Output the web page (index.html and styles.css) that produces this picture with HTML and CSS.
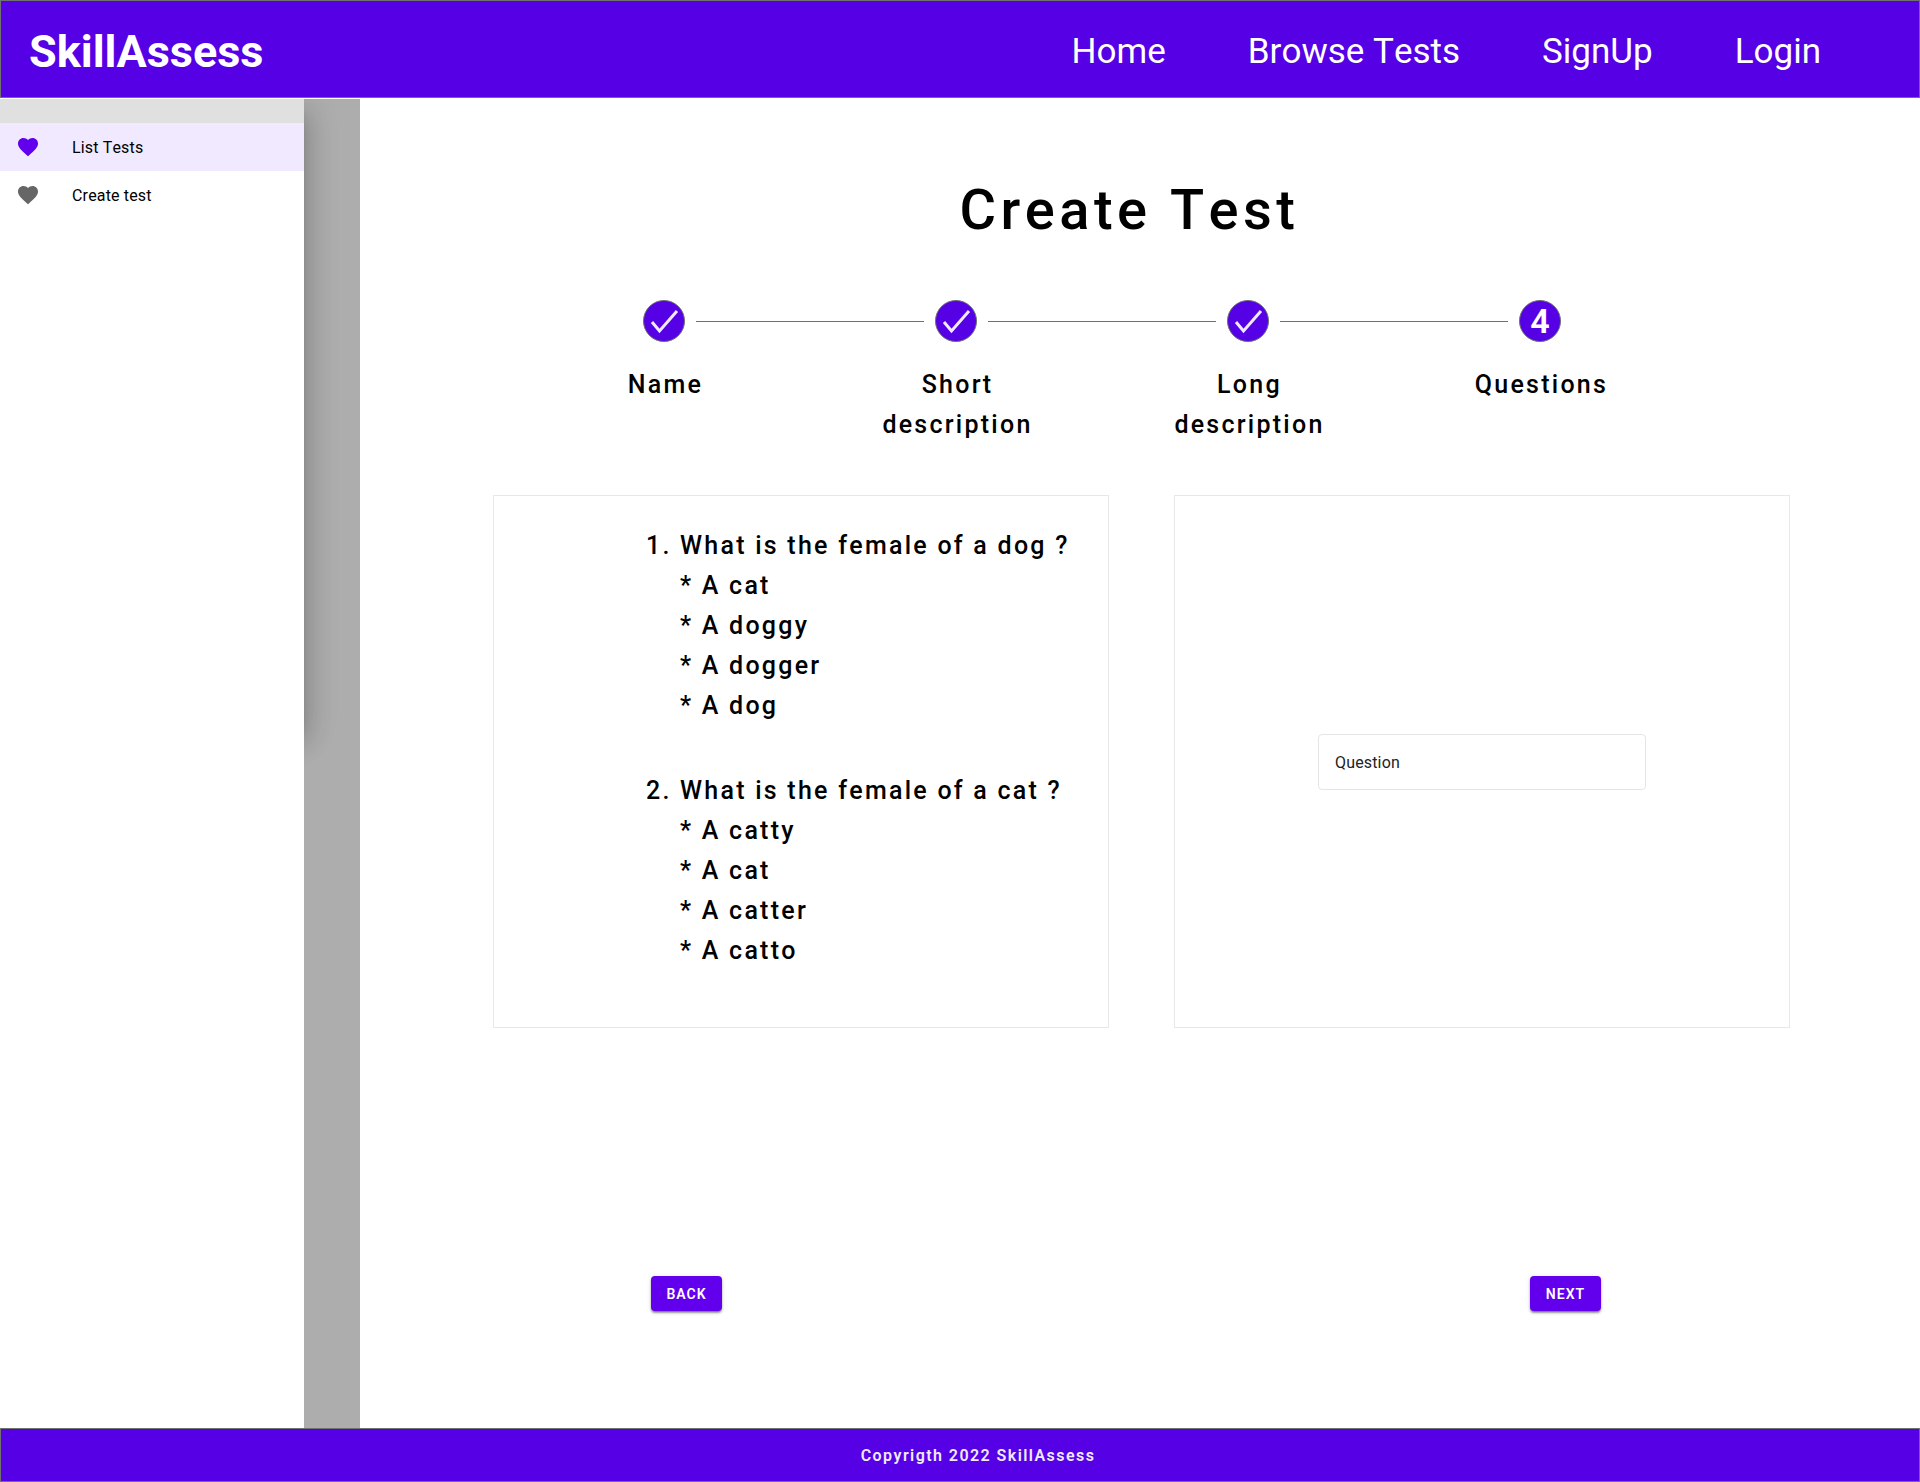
FILE: index.html
```html
<!DOCTYPE html>
<html lang="en">
<head>
  <meta charset="utf-8">
  <meta name="viewport" content="width=device-width, initial-scale=1">
  <title>SkillAssess - Create Test</title>
  <link rel="stylesheet" href="styles.css">
</head>
<body>
  <header class="topbar">
    <a class="brand" href="#">SkillAssess</a>
    <nav class="topnav">
      <a href="#">Home</a>
      <a href="#">Browse Tests</a>
      <a href="#">SignUp</a>
      <a href="#">Login</a>
    </nav>
  </header>

  <div class="layout">
    <aside class="sidebar">
      <nav class="drawer">
        <a class="drawer-item is-active" href="#">
          <svg class="heart" viewBox="0 0 24 24" aria-hidden="true"><path d="M12 21.35l-1.45-1.32C5.4 15.36 2 12.28 2 8.5 2 5.42 4.42 3 7.5 3c1.74 0 3.41.81 4.5 2.09C13.09 3.81 14.76 3 16.5 3 19.58 3 22 5.42 22 8.5c0 3.78-3.4 6.86-8.55 11.54L12 21.35z"/></svg>
          <span>List Tests</span>
        </a>
        <a class="drawer-item" href="#">
          <svg class="heart" viewBox="0 0 24 24" aria-hidden="true"><path d="M12 21.35l-1.45-1.32C5.4 15.36 2 12.28 2 8.5 2 5.42 4.42 3 7.5 3c1.74 0 3.41.81 4.5 2.09C13.09 3.81 14.76 3 16.5 3 19.58 3 22 5.42 22 8.5c0 3.78-3.4 6.86-8.55 11.54L12 21.35z"/></svg>
          <span>Create test</span>
        </a>
      </nav>
      <div class="scrim"></div>
    </aside>

    <main class="content">
      <h1 class="title">Create Test</h1>

      <ol class="steps">
        <li class="step">
          <div class="track"><span class="badge"><svg viewBox="1 1 40 40" aria-hidden="true"><path d="M9 22l7.500 9L34 11"/></svg></span></div>
          <span class="step-label">Name</span>
        </li>
        <li class="step">
          <div class="track"><span class="badge"><svg viewBox="1 1 40 40" aria-hidden="true"><path d="M9 22l7.500 9L34 11"/></svg></span></div>
          <span class="step-label">Short description</span>
        </li>
        <li class="step">
          <div class="track"><span class="badge"><svg viewBox="1 1 40 40" aria-hidden="true"><path d="M9 22l7.500 9L34 11"/></svg></span></div>
          <span class="step-label">Long description</span>
        </li>
        <li class="step">
          <div class="track"><span class="badge">4</span></div>
          <span class="step-label">Questions</span>
        </li>
      </ol>

      <div class="panels">
        <section class="panel panel-list">
          <ol class="questions">
            <li class="question">
              <span class="number">1.</span>
              <div>
                <p>What is the female of a dog ?</p>
                <ul class="answers">
                  <li>* A cat</li>
                  <li>* A doggy</li>
                  <li>* A dogger</li>
                  <li>* A dog</li>
                </ul>
              </div>
            </li>
            <li class="question">
              <span class="number">2.</span>
              <div>
                <p>What is the female of a cat ?</p>
                <ul class="answers">
                  <li>* A catty</li>
                  <li>* A cat</li>
                  <li>* A catter</li>
                  <li>* A catto</li>
                </ul>
              </div>
            </li>
          </ol>
        </section>
        <section class="panel panel-form">
          <input class="field" type="text" placeholder="Question" aria-label="Question">
        </section>
      </div>

      <div class="actions">
        <button class="button" type="button">BACK</button>
        <button class="button" type="button">NEXT</button>
      </div>
    </main>
  </div>

  <footer class="footer">Copyrigth 2022 SkillAssess</footer>
</body>
</html>
```
FILE: styles.css
```css
* {
  box-sizing: border-box;
}

body {
  margin: 0;
  min-height: 100vh;
  display: flex;
  flex-direction: column;
  font-family: Roboto, "Liberation Sans", sans-serif;
  font-kerning: none;
  color: #000;
  background: #fff;
}

a {
  color: inherit;
  text-decoration: none;
}

ol,
ul,
p {
  margin: 0;
  padding: 0;
  list-style: none;
}

/* Header */
.topbar {
  display: flex;
  align-items: center;
  justify-content: space-between;
  height: 98px;
  margin-bottom: 1px;
  padding: 0 98px 0 28px;
  border: 1px solid #707070;
  background: #5500e5;
  color: #fff;
}

.brand {
  padding-top: 5px;
  font-size: 45px;
  font-weight: 700;
}

.topnav {
  display: flex;
  gap: 82px;
  padding-top: 5px;
  font-size: 35px;
}

/* Sidebar */
.layout {
  flex: 1;
  display: flex;
}

.sidebar {
  display: flex;
  flex: 0 0 360px;
}

.drawer {
  width: 304px;
  background: #fff;
  border-top: 24px solid #e0e0e0;
}

.drawer-item {
  display: flex;
  align-items: center;
  gap: 32px;
  height: 48px;
  padding: 0 16px;
  font-size: 16px;
  letter-spacing: 0.01em;
}

.drawer-item.is-active {
  background: #f1e9ff;
}

.heart {
  width: 24px;
  height: 24px;
  fill: #666;
}

.is-active .heart {
  fill: #6200ee;
}

.scrim {
  position: relative;
  flex: 1;
  overflow: hidden;
  background: #adadad;
}

/* Shadow that the open drawer casts on the scrim */
.scrim::before {
  content: "";
  position: absolute;
  top: 4px;
  right: 100%;
  width: 304px;
  height: 624px;
  box-shadow: 0 8px 10px -5px rgba(0, 0, 0, 0.2), 0 16px 24px 2px rgba(0, 0, 0, 0.14), 0 6px 30px 5px rgba(0, 0, 0, 0.12);
}

/* Content */
.content {
  flex: 1;
  display: flex;
  flex-direction: column;
  padding: 79px 130px 117px 133px;
}

.title {
  margin: 0 24px 58px 0;
  font-size: 56px;
  line-height: 64px;
  font-weight: 500;
  letter-spacing: 0.08em;
  text-align: center;
}

.steps {
  display: grid;
  grid-template-columns: repeat(4, 1fr);
  margin: 0 104px 50px 25px;
}

.step {
  display: flex;
  flex-direction: column;
  align-items: center;
  gap: 23px;
}

.track {
  display: flex;
  align-items: center;
  gap: 11px;
  width: 100%;
}

.track::before,
.track::after {
  content: "";
  flex: 1;
  height: 1px;
  margin-top: 1px;
  background: #707070;
}

.step:first-child .track::before,
.step:last-child .track::after {
  background: none;
}

.badge {
  display: grid;
  place-items: center;
  width: 42px;
  height: 42px;
  border: 1px solid #707070;
  border-radius: 50%;
  background: #5500e5;
  color: #fff;
  font-size: 34px;
  line-height: 40px;
  font-weight: 600;
}

.badge svg {
  width: 40px;
  height: 40px;
  fill: none;
  stroke: #f1e9ff;
  stroke-width: 3;
}

.step-label {
  max-width: 160px;
  padding-left: 3px;
  font-size: 25px;
  line-height: 40px;
  font-weight: 500;
  letter-spacing: 0.09em;
  text-align: center;
}

.panels {
  display: grid;
  grid-template-columns: 1fr 1fr;
  gap: 65px;
}

.panel {
  border: 1px solid #e8e8e8;
}

.panel-list {
  padding: 30px 24px 56px 152px;
}

.questions {
  display: grid;
  gap: 45px;
  font-size: 25px;
  line-height: 40px;
  font-weight: 500;
  letter-spacing: 0.09em;
}

.question {
  display: grid;
  grid-template-columns: 34px 1fr;
}

.panel-form {
  display: grid;
  place-items: center;
}

.field {
  width: 328px;
  height: 56px;
  padding: 2px 16px 0;
  border: 1px solid #e5e5e5;
  border-radius: 4px;
  background: #fff;
  font: inherit;
  font-size: 16px;
  letter-spacing: 0.01em;
  color: #222;
}

.field::placeholder {
  color: #222;
  opacity: 1;
}

.actions {
  display: flex;
  justify-content: space-between;
  margin-top: auto;
  padding: 0 189px 0 158px;
}

.button {
  min-width: 71px;
  height: 35px;
  padding: 0 15px;
  border: 0;
  border-radius: 4px;
  background: #6200ee;
  box-shadow: 0 3px 1px -2px rgba(0, 0, 0, 0.2), 0 2px 2px rgba(0, 0, 0, 0.34), 0 1px 5px rgba(0, 0, 0, 0.12);
  color: #fff;
  font-family: inherit;
  font-size: 14px;
  font-weight: 600;
  letter-spacing: 1px;
}

/* Footer */
.footer {
  height: 54px;
  padding: 1px 0 0 36px;
  border: 1px solid #707070;
  background: #5500e5;
  color: #f1e9ff;
  font-size: 16px;
  line-height: 52px;
  font-weight: 600;
  letter-spacing: 0.09em;
  text-align: center;
}
```
